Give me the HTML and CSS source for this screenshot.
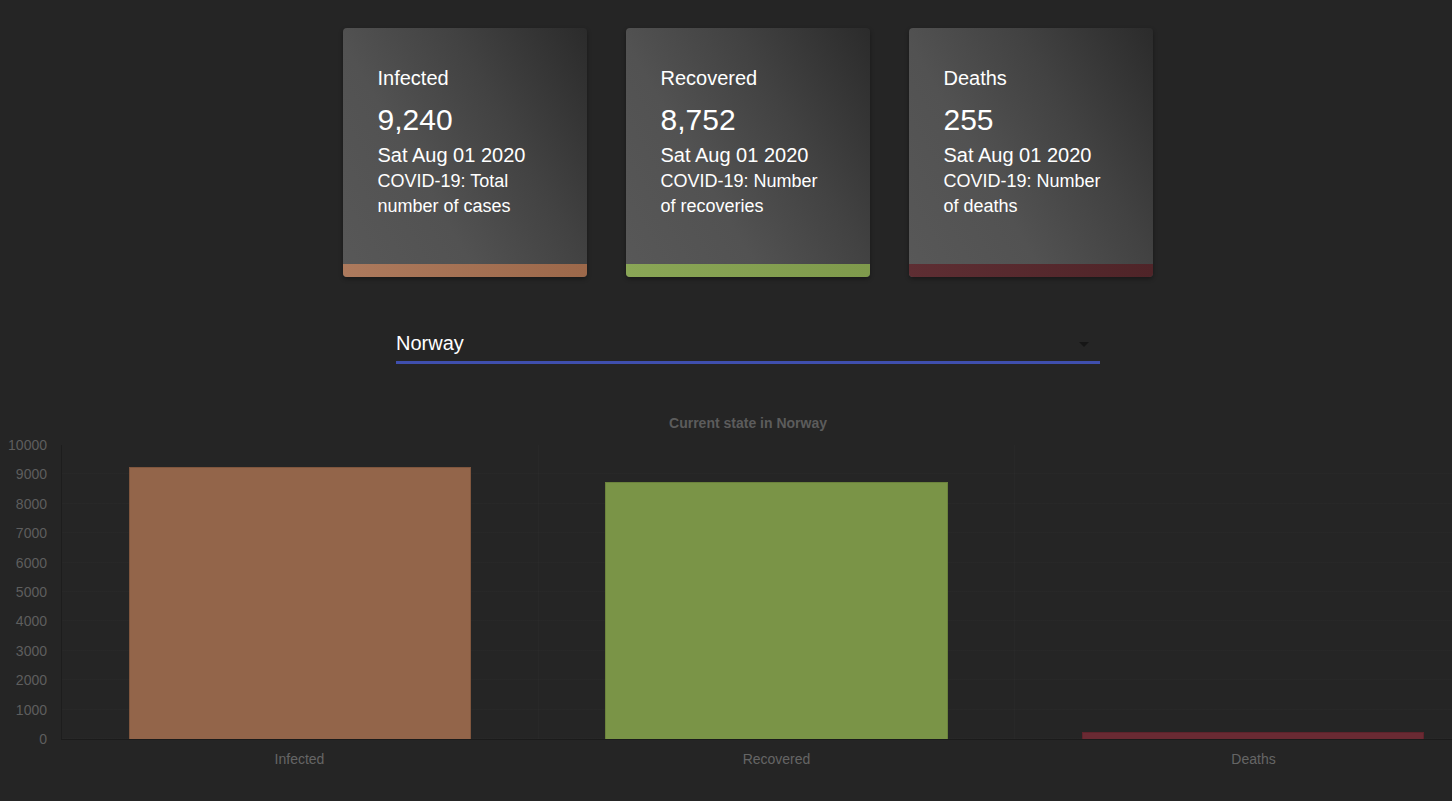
FILE: index.html
```html
<!DOCTYPE html>
<html>
<head>
<meta charset="utf-8">
<link rel="stylesheet" href="styles.css">
</head>
<body>
<div class="page">
  <div class="cards">
    <div class="card">
      <div class="card-body">
        <div class="card-title">Infected</div>
        <div class="card-num">9,240</div>
        <div class="card-date">Sat Aug 01 2020</div>
        <div class="card-desc">COVID-19: Total<br>number of cases</div>
      </div>
      <div class="strip strip-infected"></div>
    </div>
    <div class="card">
      <div class="card-body">
        <div class="card-title">Recovered</div>
        <div class="card-num">8,752</div>
        <div class="card-date">Sat Aug 01 2020</div>
        <div class="card-desc">COVID-19: Number<br>of recoveries</div>
      </div>
      <div class="strip strip-recovered"></div>
    </div>
    <div class="card">
      <div class="card-body">
        <div class="card-title">Deaths</div>
        <div class="card-num">255</div>
        <div class="card-date">Sat Aug 01 2020</div>
        <div class="card-desc">COVID-19: Number<br>of deaths</div>
      </div>
      <div class="strip strip-deaths"></div>
    </div>
  </div>

  <div class="select">
    <span class="select-value">Norway</span>
    <span class="select-arrow"></span>
  </div>

  <div class="chart">
    <div class="chart-title">Current state in Norway</div>
    <div class="chart-body">
      <div class="yaxis">
        <span>10000</span><span>9000</span><span>8000</span><span>7000</span><span>6000</span><span>5000</span><span>4000</span><span>3000</span><span>2000</span><span>1000</span><span>0</span>
      </div>
      <div class="plot">
        <div class="col"><div class="bar bar-infected" style="height: 92.4%"></div></div>
        <div class="col"><div class="bar bar-recovered" style="height: 87.52%"></div></div>
        <div class="col"><div class="bar bar-deaths" style="height: 2.55%"></div></div>
      </div>
    </div>
    <div class="xaxis">
      <div class="xlabel">Infected</div>
      <div class="xlabel">Recovered</div>
      <div class="xlabel">Deaths</div>
    </div>
  </div>
</div>
</body>
</html>
```

FILE: styles.css
```css
html, body {
  margin: 0;
  padding: 0;
  background: #252525;
  overflow: hidden;
  font-family: "Liberation Sans", Arial, sans-serif;
}

.page {
  width: 1496px;
}

.cards {
  display: flex;
  justify-content: center;
  gap: 39px;
  padding-top: 28px;
  padding-right: 1px;
}

.card {
  width: 244px;
  height: 249px;
  display: flex;
  flex-direction: column;
  border-radius: 4px;
  overflow: hidden;
  background: linear-gradient(240deg, #2b2b2b 0%, #424242 35%, #525252 65%, #585858 100%);
  box-shadow: 0 2px 4px rgba(0, 0, 0, 0.35);
}

.card-body {
  flex: 1;
  padding: 38px 12px 0 35px;
  color: #fff;
}

.card-title {
  font-size: 20px;
  line-height: 24px;
}

.card-num {
  font-size: 30px;
  line-height: 36px;
  margin-top: 12px;
}

.card-date {
  font-size: 20px;
  line-height: 24px;
  margin-top: 5px;
}

.card-desc {
  font-size: 18px;
  line-height: 25px;
  margin-top: 2px;
}

.strip {
  height: 13px;
}

.strip-infected {
  background: linear-gradient(90deg, #ad7a5d, #9c684a);
}

.strip-recovered {
  background: linear-gradient(90deg, #8aa656, #7f9a4c);
}

.strip-deaths {
  background: linear-gradient(90deg, #5e2e33, #4f2428);
}

.select {
  width: 704px;
  margin: 54px auto 0;
  padding-bottom: 6px;
  border-bottom: 3px solid #3f4fae;
  display: flex;
  align-items: center;
  justify-content: space-between;
}

.select-value {
  color: #fff;
  font-size: 20px;
  line-height: 24px;
}

.select-arrow {
  width: 0;
  height: 0;
  border-left: 5px solid transparent;
  border-right: 5px solid transparent;
  border-top: 5px solid #161616;
  margin-right: 11px;
  margin-top: 3px;
}

.chart {
  margin-top: 51px;
}

.chart-title {
  text-align: center;
  font-size: 14px;
  line-height: 16px;
  font-weight: bold;
  color: #5c5c5c;
  margin-bottom: 14px;
}

.chart-body {
  display: flex;
}

.yaxis {
  width: 61px;
  box-sizing: border-box;
  padding-right: 14px;
  margin-top: -8px;
  height: 310px;
  display: flex;
  flex-direction: column;
  justify-content: space-between;
  align-items: flex-end;
  font-size: 14px;
  line-height: 16px;
  color: #5e5e5e;
}

.plot {
  width: 1431px;
  height: 295px;
  box-sizing: border-box;
  border-left: 1px solid #1d1d1d;
  border-bottom: 1px solid #1b1b1b;
  display: grid;
  grid-template-columns: repeat(3, 1fr);
  background-image: repeating-linear-gradient(to top, rgba(255, 255, 255, 0.012) 0, rgba(255, 255, 255, 0.012) 1px, transparent 1px, transparent 29.4px);
}

.col {
  display: flex;
  align-items: flex-end;
  justify-content: center;
  border-right: 1px solid rgba(255, 255, 255, 0.015);
}

.bar {
  width: 72%;
  box-sizing: border-box;
}

.bar-infected {
  background: #93654a;
  border: 1px solid #7f563e;
  border-bottom: none;
}

.bar-recovered {
  background: #7a9447;
  border: 1px solid #6b823c;
  border-bottom: none;
}

.bar-deaths {
  background: #6a2a33;
  border: 1px solid #5e232b;
  border-bottom: none;
}

.xaxis {
  display: grid;
  grid-template-columns: repeat(3, 477px);
  margin-left: 61px;
}

.xlabel {
  text-align: center;
  font-size: 14px;
  line-height: 16px;
  padding-top: 4px;
  color: #656565;
}
```
